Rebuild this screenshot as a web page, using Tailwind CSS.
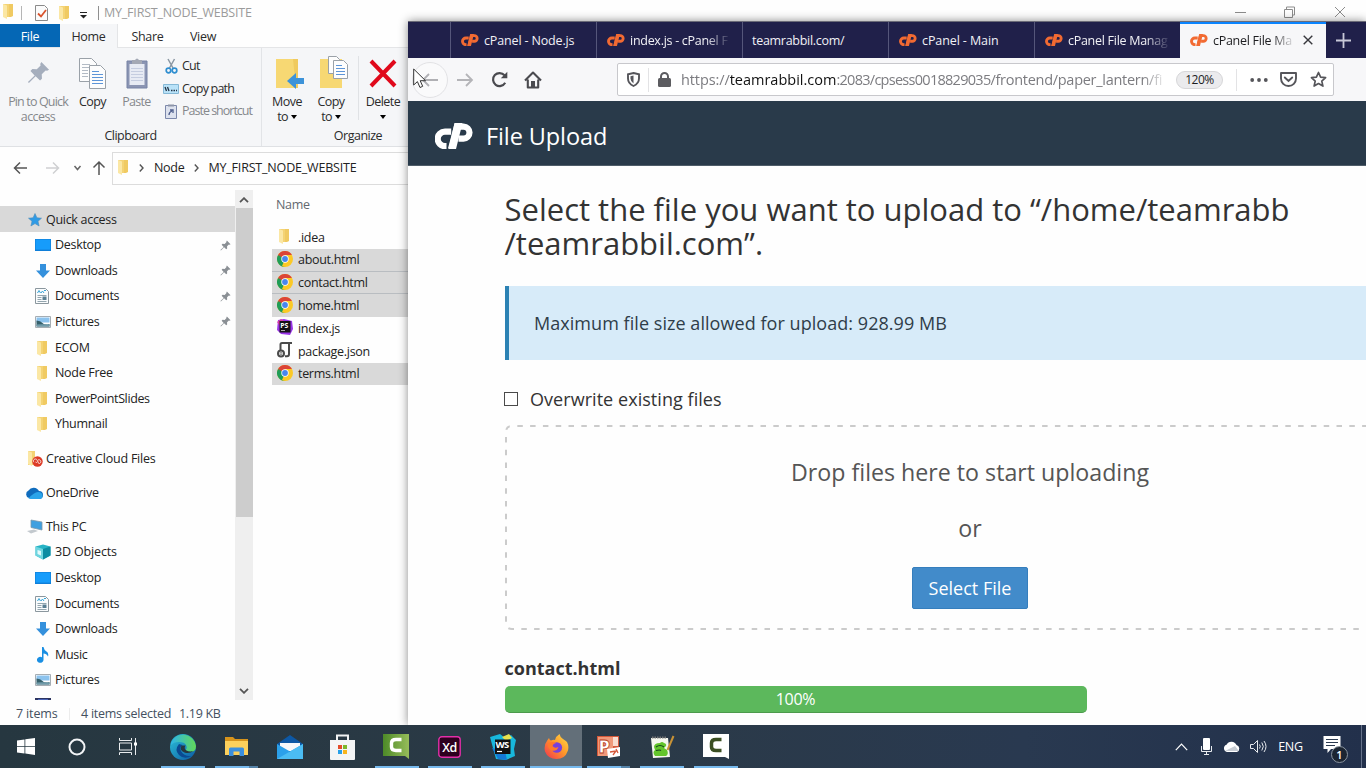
<!DOCTYPE html>
<html lang="en">
<head>
<meta charset="utf-8">
<title>File Upload</title>
<script src="https://cdn.jsdelivr.net/npm/@tailwindcss/browser@4"></script>
</head>
<body class="w-[1366px] h-[768px] overflow-hidden bg-white font-['Open_Sans','Noto_Sans',sans-serif]">

<svg width="0" height="0" class="absolute">
  <defs>
    <linearGradient id="gEdge" x1="0" y1="0" x2="1" y2="1"><stop offset="0" stop-color="#2cc3d8"/><stop offset="1" stop-color="#0c59a4"/></linearGradient>
    <linearGradient id="gEdge2" x1="0" x2="1"><stop offset="0" stop-color="#2fb5e8"/><stop offset="1" stop-color="#62d957"/></linearGradient>
    <linearGradient id="gFox" x1="1" y1="0" x2="0" y2="1"><stop offset="0" stop-color="#ffe14a"/><stop offset=".45" stop-color="#ff9a2a"/><stop offset="1" stop-color="#f2304f"/></linearGradient>
    <linearGradient id="gCam" x1="0" x2="1"><stop offset="0" stop-color="#4d8a28"/><stop offset="1" stop-color="#96bd5a"/></linearGradient>
    <symbol id="folder" viewBox="0 0 12 16"><path d="M1 1h7v13H1z" fill="#f4d374"/><path d="M7 1h4v12l-2 1H7z" fill="#f0ca62"/><path d="M1 1l4 1.6V16L1 14z" fill="#fbe7a4"/></symbol>
    <symbol id="monitor" viewBox="0 0 16 12"><path d="M0 0h16v12H0z" fill="#0f7ed8"/><path d="M.6.6h14.8v10H.6z" fill="#169cfb"/></symbol>
    <symbol id="down" viewBox="0 0 14 14"><path d="M4 0h6v6.500h4L7 14 0 6.500h4z" fill="#3490dc"/></symbol>
    <symbol id="doc" viewBox="0 0 14 16"><path d="M.5.5h10l3 3v12H.5z" fill="#fafcfd" stroke="#8b979e"/><path d="M2.500 5L4 2.500 5.500 5M6 5l1.500-2L9 5m0-2.500h2" stroke="#37a3d6" fill="none"/><path d="M2.500 7.500h9M2.500 9.500h4M2.500 11.500h4M2.500 13.500h9" stroke="#93a5ae"/><path d="M7.500 8.500h4v3.500h-4z" fill="#5b7f92"/></symbol>
    <symbol id="pic" viewBox="0 0 16 12"><path d="M.5.5h15v11H.5z" fill="#fff" stroke="#a5adb3"/><path d="M1.500 1.500h13v5h-13z" fill="#8cc3ee"/><path d="M1.500 4.500q4 0 6 2.500t7 1v2.500h-13z" fill="#35606b"/><path d="M1.500 8.500q6-.5 13 0v2h-13z" fill="#6f9aa9"/></symbol>
    <symbol id="pin" viewBox="0 0 12 12"><path d="M7.500.5l4 4-1 .6-.8-.2-2 2 .1 2.300-1 1L4.500 8 1 11.500.5 11 4 7.500 1.800 5.200l1-1 2.300.1 2-2-.2-.8z" fill="#8a8f94"/></symbol>
    <symbol id="chrome" viewBox="0 0 16 16"><circle cx="8" cy="8" r="8" fill="#fbc926"/><path d="M8 8L1.070 4A8 8 0 0 0 8 16z" fill="#1f9d58"/><path d="M8 8l3.300 2L8 16A8 8 0 0 1 5 15z" fill="#fbc926"/><path d="M1.070 4A8 8 0 0 1 14.930 4H8L5 9z" fill="#dc4437"/><path d="M1.070 4L4.600 10 8 8z" fill="#1f9d58"/><circle cx="8" cy="8" r="3.700" fill="#fff"/><circle cx="8" cy="8" r="2.900" fill="#4886ee"/></symbol>
    <symbol id="cp" viewBox="0 0 38 26"><g fill="none" stroke="currentColor" stroke-width="6.200"><path d="M16.200 8.600H10a6.400 6.400 0 0 0 0 14.600H11.500" /><path d="M16 26L22 3.600h6.500a6 6 0 0 1 0 12H23.500"/></g><path d="M19.500 0h8l-6.500 26h-7.500z" fill="currentColor"/></symbol>
  </defs>
</svg>

<!-- File Explorer window -->
<section class="absolute inset-0 h-[725px] bg-[#fefefe] flex flex-col text-[12.5px] leading-4 tracking-[-0.3px] text-[#2b2b2b]">
  <header class="h-6 shrink-0 flex items-center relative pt-[2px]">
    <svg class="w-[12px] h-[16px] ml-[2px] -mt-1"><use href="#folder"/></svg>
    <span class="w-px h-[14px] bg-[#b5b5b5] ml-[7px]"></span>
    <svg class="w-[13px] h-[16px] ml-[13px]" viewBox="0 0 13 16"><path d="M.5.5h9l3 3v12H.5z" fill="#fbfbfb" stroke="#8a8a8a"/><path d="M3 8.500l3 3L11 5" fill="none" stroke="#d9532c" stroke-width="1.800"/></svg>
    <svg class="w-[12px] h-[16px] ml-[10px]"><use href="#folder"/></svg>
    <svg class="w-[7px] h-[7px] ml-[10px] mt-1" viewBox="0 0 7 7"><path d="M0 .5h7" stroke="#222"/><path d="M0 3h7L3.500 6.500z" fill="#222"/></svg>
    <span class="w-px h-[14px] bg-[#8f8f8f] ml-[11px]"></span>
    <span class="ml-[5px] text-[#9b9b9b] tracking-[-0.2px]">MY_FIRST_NODE_WEBSITE</span>
    <svg class="w-[112px] h-[12px] absolute left-[1234px] top-[6px]" viewBox="0 0 112 12" fill="none" stroke="#8c8c8c"><path d="M1 6.500h11M50.500 3.500h8v8h-8zM52.500 3v-2h8v8h-2M101 1l10 10M111 1l-10 10"/></svg>
  </header>
  <nav class="h-6 shrink-0 flex text-center leading-[26px] border-b border-[#e4e5e7]">
    <span class="w-[60px] bg-[#0567b5] text-white">File</span>
    <span class="w-[58px] bg-[#f5f6f8] border-r border-[#e4e5e7] h-6">Home</span>
    <span class="w-[59px]">Share</span>
    <span class="w-[52px]">View</span>
  </nav>
  <div class="h-[99px] shrink-0 bg-[#f5f6f8] border-b border-[#dfe1e4] flex">
    <div class="w-[262px] border-r border-[#e2e4e7] flex flex-col">
      <div class="flex h-[80px]">
        <div class="w-[76px] flex flex-col items-center text-[#85888c] text-center leading-[15px] pt-[13px] tracking-[-0.85px] whitespace-nowrap">
          <svg class="w-[23px] h-[23px]"  viewBox="0 0 12 12"><path d="M7.500.5l4 4-1 .6-.8-.2-2 2 .1 2.300-1 1L4.500 8 1 11.500.5 11 4 7.500 1.800 5.200l1-1 2.300.1 2-2-.2-.8z" fill="#a5aebd"/></svg>
          <span class="mt-[10px]">Pin to Quick<br><span class="tracking-[-0.6px]">access</span></span>
        </div>
        <div class="w-[33px] flex flex-col items-center pt-[10px]">
          <svg class="w-[28px] h-[31px]" viewBox="0 0 28 31"><g fill="#fdfdfd" stroke="#9aa1a8"><path d="M.5.5h12l5 5v18H.5z"/><path d="M10.500 7.500h11l5 5v18h-16z"/></g><path d="M3 6.500h8M3 9.500h7M3 12.500h6M3 15.500h6M3 18.500h6" stroke="#b2bac4"/><path d="M13 13.500h7M13 16.500h11M13 19.500h11M13 22.500h11M13 25.500h11" stroke="#5d95d8"/></svg>
          <span class="mt-[5px] tracking-[-0.6px]">Copy</span>
        </div>
        <div class="w-[54px] flex flex-col items-center pt-[10px] text-[#85888c]">
          <svg class="w-[22px] h-[31px] ml-[2px]" viewBox="0 0 22 31"><path d="M1 3h20v27H1z" fill="#8b95b3" stroke="#7783a6"/><path d="M3.500 6h15v21h-15z" fill="#e7ebf4"/><path d="M6 2h3q2-3 4 0h3v4H6z" fill="#a4a9b5"/><path d="M5 10.500h12M5 13.500h12M5 16.500h12M5 19.500h12M5 22.500h12" stroke="#c5cde0"/></svg>
          <span class="mt-[5px] ml-px tracking-[-0.7px]">Paste</span>
        </div>
        <div class="flex flex-col pt-[6px] tracking-[-0.8px] whitespace-nowrap">
          <div class="flex items-center h-[23px]"><svg class="w-[13px] h-[16px] ml-[2px] mr-[4px]" viewBox="0 0 13 16" fill="none"><path d="M3 1l5 9M9.500 1l-5 9" stroke="#8a97a3" stroke-width="1.500"/><circle cx="3.500" cy="12.500" r="2.300" stroke="#2f8ed0" stroke-width="1.700"/><circle cx="9.500" cy="12.500" r="2.300" stroke="#2f8ed0" stroke-width="1.700"/></svg>Cut</div>
          <div class="flex items-center h-[23px]"><svg class="w-[16px] h-[10px] mr-[3px]" viewBox="0 0 16 10"><path d="M.5.5h15v9H.5z" fill="#b9e2f8" stroke="#85b8d6"/><path d="M2 3l1.500 4M4.500 3L6 7M8 6.500h1.500M10.500 6.500h1.500M13 6.500h1" stroke="#234" stroke-width="1.300"/></svg>Copy path</div>
          <div class="flex items-center h-[22.5px] text-[#85888c] tracking-[-1px]"><svg class="w-[12px] h-[15px] ml-[2px] mr-[5px]" viewBox="0 0 12 15"><path d="M.5 1.500h11v13H.5z" fill="#dde2ee" stroke="#7c88ab"/><path d="M3 .5h6v2H3z" fill="#8d95a8"/><path d="M4 11q0-3 3-4M5 6h3v3" stroke="#4d5d8c" stroke-width="1.300" fill="none"/></svg>Paste shortcut</div>
        </div>
      </div>
      <div class="text-center leading-[20px] tracking-[-0.5px]">Clipboard</div>
    </div>
    <div class="flex flex-col w-[192px]">
      <div class="flex h-[80px] text-center leading-[15px] tracking-[-0.55px]">
        <div class="w-[50px] flex flex-col items-center pt-[10px]">
          <svg class="w-[28px] h-[31px] ml-[5px]" viewBox="0 0 28 31"><path d="M0 1h22v29H0z" fill="#f7d873"/><path d="M17 1h5v29h-2z" fill="#f0ca5e"/><path d="M28 20h-8v-5l-9 8 9 8v-5h8z" fill="#3d93d9"/></svg>
          <span class="mt-[5px]">Move<br>to <span class="inline-block border-x-[3px] border-x-transparent border-t-[4px] border-t-black align-[2px]"></span></span>
        </div>
        <div class="w-[38px] flex flex-col items-center pt-[8px]">
          <svg class="w-[29px] h-[33px] ml-[7px]" viewBox="0 0 29 33"><path d="M0 3h22v29H0z" fill="#f7d873"/><g fill="#fdfdfd" stroke="#9aa1a8"><path d="M8.500.5h8l3 3v14h-11z"/><path d="M13.500 4.500h10l4 4v14h-14z"/></g><path d="M16 9.500h6M16 12.500h9M16 15.500h9M16 18.500h9" stroke="#5d95d8"/></svg>
          <span class="mt-[5px]">Copy<br>to <span class="inline-block border-x-[3px] border-x-transparent border-t-[4px] border-t-black align-[2px]"></span></span>
        </div>
        <span class="w-px h-[64px] mt-[8px] ml-[8px] bg-[#e0e2e5]"></span>
        <div class="w-[48px] flex flex-col items-center pt-[11px]">
          <svg class="w-[28px] h-[29px]" viewBox="0 0 28 29"><path d="M2 2l24 25M26 2L2 27" stroke="#e0091b" stroke-width="4"/></svg>
          <span class="mt-[6px]">Delete<br><span class="inline-block border-x-[3px] border-x-transparent border-t-[4px] border-t-black align-[2px]"></span></span>
        </div>
      </div>
      <div class="text-center leading-[20px] tracking-[-0.5px]">Organize</div>
    </div>
  </div>
  <div class="h-[40px] shrink-0 flex items-center pt-[2px]">
    <svg class="w-[94px] h-[16px] ml-[13px]" viewBox="0 0 94 16" fill="none" stroke-width="1.500"><path d="M14 8H1.500M7 2.500L1.500 8 7 13.500" stroke="#555"/><path d="M33 8h12.500M40 2.500L45.500 8 40 13.500" stroke="#cfd0d2"/><path d="M61.500 6l3 3.500L67.500 6" stroke="#666"/><path d="M86 15V2M80.500 7.500L86 2l5.500 5.500" stroke="#555"/></svg>
    <div class="ml-[5px] h-[33px] flex-1 border border-[#dcdcdc] flex items-center text-[#222]">
      <svg class="w-[12px] h-[16px] ml-[4px] -mt-[2px]"><use href="#folder"/></svg>
      <svg class="w-[5px] h-[8px] ml-[10px] mr-[10px]" viewBox="0 0 5 8"><path d="M.8.5L4 4 .8 7.500" fill="none" stroke="#555" stroke-width="1.400"/></svg>
      <span>Node</span>
      <svg class="w-[5px] h-[8px] ml-[10px] mr-[9px]" viewBox="0 0 5 8"><path d="M.8.5L4 4 .8 7.500" fill="none" stroke="#555" stroke-width="1.400"/></svg>
      <span class="tracking-[-0.18px]">MY_FIRST_NODE_WEBSITE</span>
    </div>
  </div>
  <div class="h-[513px] shrink-0 flex">
    <div class="w-[235px] pt-[19px] h-[513px] overflow-hidden flex flex-col text-[#222] [&>div]:h-[25.62px] [&>div]:pt-[1.500px] [&>div]:shrink-0 [&>div]:flex [&>div]:items-center">
      <div class="bg-[#d9d9d9]"><svg class="w-[14px] h-[14px] ml-[28px] mr-[4px]" viewBox="0 0 14 14"><path d="M7 .5l1.900 4.300 4.600.4-3.500 3.100 1.100 4.700L7 10.600 2.900 13 4 8.300.5 5.200l4.600-.4z" fill="#2f9be6" stroke="#4d8cb8" stroke-width=".6"/></svg>Quick access</div>
      <div><svg class="w-[16px] h-[12px] ml-[35px] mr-[4px]"><use href="#monitor"/></svg><span class="flex-1">Desktop</span><svg class="w-[11px] h-[11px] mr-[4px]"><use href="#pin"/></svg></div>
      <div><svg class="w-[14px] h-[14px] ml-[36px] mr-[5px]"><use href="#down"/></svg><span class="flex-1">Downloads</span><svg class="w-[11px] h-[11px] mr-[4px]"><use href="#pin"/></svg></div>
      <div><svg class="w-[14px] h-[16px] ml-[35px] mr-[6px]"><use href="#doc"/></svg><span class="flex-1">Documents</span><svg class="w-[11px] h-[11px] mr-[4px]"><use href="#pin"/></svg></div>
      <div><svg class="w-[16px] h-[12px] ml-[35px] mr-[4px]"><use href="#pic"/></svg><span class="flex-1">Pictures</span><svg class="w-[11px] h-[11px] mr-[4px]"><use href="#pin"/></svg></div>
      <div><svg class="w-[12px] h-[16px] ml-[36px] mr-[7px]"><use href="#folder"/></svg>ECOM</div>
      <div><svg class="w-[12px] h-[16px] ml-[36px] mr-[7px]"><use href="#folder"/></svg>Node Free</div>
      <div><svg class="w-[12px] h-[16px] ml-[36px] mr-[7px]"><use href="#folder"/></svg><span class="tracking-[-0.4px]">PowerPointSlides</span></div>
      <div><svg class="w-[12px] h-[16px] ml-[36px] mr-[7px]"><use href="#folder"/></svg>Yhumnail</div>
      <div class="mt-[8.5px]"><svg class="w-[16px] h-[16px] ml-[27px] mr-[3px]" viewBox="0 0 16 16"><path d="M1 0h7v14H1z" fill="#f4d374"/><path d="M1 0l4 1.600V15l-4-2z" fill="#fbe7a4"/><circle cx="10.500" cy="10.500" r="5.200" fill="#dc3b26"/><path d="M6.800 11.200a2 2 0 1 1 3.600-1.400l1.200 2M8.500 11a1.500 1.500 0 0 0 2 0M11 9a1.900 1.900 0 1 1 .5 3.500" stroke="#fff" stroke-width=".8" fill="none"/></svg><span class="tracking-[-0.22px]">Creative Cloud Files</span></div>
      <div class="mt-[8.5px]"><svg class="w-[18px] h-[12px] ml-[25px] mr-[3px]" viewBox="0 0 18 12"><path d="M4 11a4 4 0 0 1-.5-7.500A6 6 0 0 1 14 4a4 4 0 0 1 0 8z" fill="#0f6cbd"/><path d="M3.500 11.500Q9 5 13 5q4.500 0 4.500 4 0 3-3 3h-9z" fill="#2aa4ea"/></svg>OneDrive</div>
      <div class="mt-[8.5px]"><svg class="w-[17px] h-[15px] ml-[26px] mr-[3px]" viewBox="0 0 17 15"><path d="M5 1l11 2v8L5 8.500z" fill="#3fa0e0" stroke="#7c98aa" stroke-width=".8"/><path d="M1 12l7-1.500 4 1.500-7 2.500z" fill="#c3c9ce"/></svg>This PC</div>
      <div><svg class="w-[16px] h-[16px] ml-[35px] mr-[4px]" viewBox="0 0 16 16"><path d="M8 .5l7.500 2v9L8 15.500.5 11.500v-9z" fill="#27b3c5"/><path d="M.5 2.500L8 5v10.500l-7.500-4z" fill="#6ed5df"/><path d="M8 5l7.500-2.500v9L8 15.500z" fill="#0d8ca2"/><path d="M2.500 6L6 7v4.500l-3.500-1.500z" fill="#e3fafc"/></svg><span class="tracking-[-0.15px]">3D Objects</span></div>
      <div><svg class="w-[16px] h-[12px] ml-[35px] mr-[4px]"><use href="#monitor"/></svg>Desktop</div>
      <div><svg class="w-[14px] h-[16px] ml-[35px] mr-[6px]"><use href="#doc"/></svg>Documents</div>
      <div><svg class="w-[14px] h-[14px] ml-[36px] mr-[5px]"><use href="#down"/></svg>Downloads</div>
      <div><svg class="w-[12px] h-[16px] ml-[37px] mr-[6px]" viewBox="0 0 12 16"><path d="M5 0h1.500q.5 3 3 4.500T11 9.500q-1.500-3-4.500-3V13A3.300 3 0 1 1 5 10.300z" fill="#1a8fe3"/></svg>Music</div>
      <div><svg class="w-[16px] h-[12px] ml-[35px] mr-[4px]"><use href="#pic"/></svg>Pictures</div>
      <div><svg class="w-[16px] h-[16px] ml-[35px]" viewBox="0 0 16 16"><path d="M0 0h16v16H0z" fill="#2d3560"/><path d="M3 1h10v14H3z" fill="#4a64b8"/></svg></div>
    </div>
    <div class="w-[18px] mt-[3px] bg-[#efefef] flex flex-col items-center h-[510px]">
      <svg class="w-[10px] h-[6px] mt-[7px]" viewBox="0 0 10 6"><path d="M1 5.200L5 1.200l4 4" fill="none" stroke="#555" stroke-width="1.800"/></svg>
      <span class="w-[17px] h-[309px] mt-[5px] bg-[#cdcdcd]"></span>
      <svg class="w-[10px] h-[6px] mt-[171px]" viewBox="0 0 10 6"><path d="M1 .8l4 4 4-4" fill="none" stroke="#555" stroke-width="1.800"/></svg>
    </div>
    <div class="ml-[19px] flex-1 flex flex-col pt-[10px] text-[#222] [&>div]:h-[22.75px] [&>div]:pt-px [&>div]:flex [&>div]:items-center">
      <span class="pl-[4px] text-[#63686f] mb-[13px]">Name</span>
      <div><svg class="w-[12px] h-[16px] ml-[6px] mr-[8px] -mt-1"><use href="#folder"/></svg>.idea</div>
      <div class="bg-[#d9d9d9] border-b border-[#b9bdc1]"><svg class="w-[16px] h-[16px] ml-[5px] mr-[5px] -mt-[2px]"><use href="#chrome"/></svg>about.html</div>
      <div class="bg-[#d9d9d9] border-b border-[#b9bdc1]"><svg class="w-[16px] h-[16px] ml-[5px] mr-[5px] -mt-[2px]"><use href="#chrome"/></svg>contact.html</div>
      <div class="bg-[#d9d9d9]"><svg class="w-[16px] h-[16px] ml-[5px] mr-[5px] -mt-[2px]"><use href="#chrome"/></svg>home.html</div>
      <div><svg class="w-[16px] h-[16px] ml-[5px] mr-[5px] -mt-[3px]" viewBox="0 0 16 16"><path d="M1 1l6-1 8 2 1 8-3 6-9-1-4-4z" fill="#9a35e8"/><path d="M0 3l4-3 3 2-4 5z" fill="#d93ba5"/><path d="M2.500 2h11v11.500h-11z" fill="#151018"/><text x="3.200" y="8.600" font-size="6.800" font-weight="700" fill="#fff" letter-spacing="0">PS</text><path d="M4 11.500h4" stroke="#aaa"/></svg>index.js</div>
      <div><svg class="w-[16px] h-[16px] ml-[5px] mr-[5px] -mt-[3px]" viewBox="0 0 16 16" fill="none" stroke="#4a4a4a" stroke-width="2"><path d="M3.500 8V2.500Q3.500 1 5 1h10M12 1v11q0 2.300-2 2.300H8"/><circle cx="4" cy="11.500" r="3"/><circle cx="4" cy="11.500" r=".3"/></svg>package.json</div>
      <div class="bg-[#d9d9d9]"><svg class="w-[16px] h-[16px] ml-[5px] mr-[5px] -mt-[2px]"><use href="#chrome"/></svg>terms.html</div>
    </div>
  </div>
  <footer class="flex-1 flex items-center pl-[16px] pt-[2px] text-[#44505f] tracking-[-0.15px]"><span class="w-[53px]">7 items</span><span class="w-px h-3 bg-[#ececec]"></span><span class="ml-[11px] w-[98px] whitespace-nowrap tracking-[-0.25px]">4 items selected</span><span class="tracking-[-0.3px]">1.19 KB</span></footer>
</section>

<!-- Firefox window -->
<section class="absolute left-[408px] top-[21px] w-[958px] h-[704px] bg-[#fefefe] border-t border-[#6b6b78] shadow-[0_0_9px_rgba(0,0,0,0.45)] flex flex-col overflow-hidden">
  <div class="h-[36px] shrink-0 bg-[#20204a] flex text-[12.5px] text-[#f1f1f6] tracking-[-0.28px] whitespace-nowrap [&>div>span]:pt-[2px]">
    <span class="w-[42px] shrink-0"></span>
    <div class="w-[146px] shrink-0 border-l border-[#55567a] flex items-center"><svg class="w-[18px] h-[12px] ml-[10px] mr-[5px] text-[#f26a32]"><use href="#cp"/></svg><span class="tracking-[-0.15px]">cPanel - Node.js</span></div>
    <div class="w-[146px] shrink-0 border-l border-[#55567a] flex items-center"><svg class="w-[18px] h-[12px] ml-[10px] mr-[5px] text-[#f26a32]"><use href="#cp"/></svg><span class="w-[101px] [mask-image:linear-gradient(to_right,black_75%,transparent)]">index.js - cPanel F</span></div>
    <div class="w-[146px] shrink-0 border-l border-[#55567a] flex items-center pl-[9px]"><span>teamrabbil.com/</span></div>
    <div class="w-[146px] shrink-0 border-l border-[#55567a] flex items-center"><svg class="w-[18px] h-[12px] ml-[10px] mr-[5px] text-[#f26a32]"><use href="#cp"/></svg><span class="tracking-[-0.1px]">cPanel - Main</span></div>
    <div class="w-[146px] shrink-0 border-l border-[#55567a] flex items-center"><svg class="w-[18px] h-[12px] ml-[10px] mr-[5px] text-[#f26a32]"><use href="#cp"/></svg><span class="w-[103px] tracking-[-0.28px] [mask-image:linear-gradient(to_right,black_75%,transparent)]">cPanel File Manag</span></div>
    <div class="w-[146px] shrink-0 bg-[#f7f7f9] border-t-2 border-[#0a84ff] text-[#1d1d20] flex items-center pb-[2px]"><svg class="w-[18px] h-[12px] ml-[10px] mr-[5px] text-[#f26a32]"><use href="#cp"/></svg><span class="w-[83px] tracking-[-0.28px] [mask-image:linear-gradient(to_right,black_70%,transparent)]">cPanel File Ma</span><svg class="w-[10px] h-[10px] ml-[7px]" viewBox="0 0 10 10"><path d="M.7.7l8.600 8.600M9.300.7L.7 9.300" stroke="#38383d" stroke-width="1.400"/></svg></div>
    <div class="flex items-center pl-[10px]"><svg class="w-[15px] h-[15px]" viewBox="0 0 15 15"><path d="M7.500 0v15M0 7.500h15" stroke="#c9c9d8" stroke-width="1.800"/></svg></div>
  </div>
  <div class="h-[43px] shrink-0 bg-[#f7f7f9] flex items-center">
    <span class="w-[36px] h-[36px] ml-[4px] rounded-full border border-[#e2e2e5] bg-[#fafafb] flex items-center justify-center"><svg class="w-[18px] h-[14px]" viewBox="0 0 18 14"><path d="M17 7H2M8 1L2 7l6 6" fill="none" stroke="#b0b0b4" stroke-width="1.800"/></svg></span>
    <svg class="w-[18px] h-[14px] ml-[8px]" viewBox="0 0 18 14"><path d="M1 7h15M10 1l6 6-6 6" fill="none" stroke="#b4b4b8" stroke-width="1.800"/></svg>
    <svg class="w-[17px] h-[17px] ml-[17px]" viewBox="0 0 17 17"><path d="M14.200 11.800A6.500 6.500 0 1 1 13.500 4.300" fill="none" stroke="#4a4a4f" stroke-width="2.200"/><path d="M16.300.8v6.500H9.800z" fill="#4a4a4f"/></svg>
    <svg class="w-[18px] h-[18px] ml-[16px]" viewBox="0 0 18 18"><path d="M1 9.500L9 1.500l8 8M3.800 8.500V16.500h10.400V8.500" fill="none" stroke="#4a4a4f" stroke-width="2.100" stroke-linejoin="round"/><path d="M7 10h4v6.500H7z" fill="#4a4a4f"/></svg>
    <div class="ml-[75px] w-[717px] h-[33px] shrink-0 rounded-[2px] border border-[#c8c8cc] bg-white flex items-center text-[#7c7c80]">
      <svg class="w-[13px] h-[15px] ml-[9px]" viewBox="0 0 13 15"><path d="M6.500 1L12 2.300v4.200q0 5-5.500 7.500Q1 11.500 1 6.500V2.300z" fill="none" stroke="#55555a" stroke-width="1.900"/><path d="M6.500 3.500v8Q3.500 9.500 3.500 6.500V4.200z" fill="#55555a"/></svg>
      <span class="w-px h-[24px] bg-[#e3e3e5] ml-[8px]"></span>
      <svg class="w-[13px] h-[15px] ml-[9px]" viewBox="0 0 13 15"><rect y="6" width="13" height="9" rx="1.500" fill="#5c5c60"/><path d="M3 7V4.500a3.500 3.500 0 0 1 7 0V7" fill="none" stroke="#5c5c60" stroke-width="2"/></svg>
      <span class="ml-[10px] w-[486px] whitespace-nowrap text-[14.5px] [mask-image:linear-gradient(to_right,black_95%,transparent)]"><span class="tracking-[-0.1px]">https://</span><span class="text-[#111]">teamrabbil.com</span><span class="tracking-[-0.72px]">:2083/cpsess0018829035</span><span class="tracking-[-0.28px]">/frontend/paper_lantern/fi</span></span>
      <span class="ml-[9px] w-[47px] h-[18px] rounded-full bg-[#ebebed] border border-[#d6d6d8] text-[12px] leading-[16px] text-[#1d1d1f] text-center tracking-[-0.5px]">120%</span>
      <span class="w-px h-[22px] bg-[#e3e3e5] ml-[13px]"></span>
      <svg class="w-[18px] h-[4px] ml-[13px]" viewBox="0 0 18 4" fill="#55555a"><circle cx="2.200" cy="2" r="1.900"/><circle cx="9" cy="2" r="1.900"/><circle cx="15.800" cy="2" r="1.900"/></svg>
      <svg class="w-[17px] h-[15px] ml-[12px]" viewBox="0 0 17 15"><path d="M1 1h15v5.500a7.500 7.500 0 0 1-15 0z" fill="none" stroke="#55555a" stroke-width="1.900" stroke-linejoin="round"/><path d="M4.800 5.500l3.700 3.500 3.700-3.500" fill="none" stroke="#55555a" stroke-width="1.900" stroke-linecap="round"/></svg>
      <svg class="w-[17px] h-[17px] ml-[13px]" viewBox="0 0 17 17"><path d="M8.500 1.500l2.100 4.700 5 .5-3.800 3.400 1.100 5-4.400-2.600L4.100 15.100l1.100-5L1.400 6.700l5-.5z" fill="none" stroke="#55555a" stroke-width="1.700" stroke-linejoin="round"/></svg>
    </div>
  </div>
  <header class="h-[65px] shrink-0 bg-[#293a4a] border-b border-[#4f5d69] flex items-center pl-[27px] text-white mb-[7px] pt-[6px]">
    <svg class="w-[38px] h-[26px]"><use href="#cp"/></svg>
    <h1 class="ml-[13px] text-[23.500px] tracking-[-0.1px] leading-[30px]">File Upload</h1>
  </header>
  <main class="pl-[96.5px] text-[#333] text-[18px]">
    <h2 class="mt-[19px] text-[31px] leading-[34.3px] whitespace-nowrap">Select the file you want to upload to “/home/teamrabb<br>/teamrabbil.com”.</h2>
    <div class="mt-[25px] h-[74px] w-[931px] bg-[#d7ebf9] border-l-4 border-[#2c82b4] pl-[25.500px] leading-[75px] tracking-[0.05px] text-[#2f3d49]">Maximum file size allowed for upload: 928.99 MB</div>
    <label class="mt-[26px] flex items-center h-[26px]"><span class="w-[14px] h-[14px] border border-[#4a4a4a] bg-white mr-[12px] -ml-[.5px]"></span><span class="tracking-[0.05px] pt-px">Overwrite existing files</span></label>
    <div class="relative mt-[13px] w-[931px] h-[205px] flex flex-col items-center text-[23.200px] text-[#555] pt-[30px]">
      <svg class="absolute inset-0 w-[931px] h-[205px]" fill="none" stroke="#cbcbcb" stroke-width="2"><path d="M1 10V7Q1 1 7 1H931" stroke-dasharray="5.500 7.300" stroke-dashoffset="-5"/><path d="M1 12V198Q1 204 7 204H931" stroke-dasharray="5.500 7.300"/></svg>
      <span class="leading-[34px]">Drop files here to start uploading</span>
      <span class="leading-[34px] mt-[22px]">or</span>
      <button class="mt-[22px] w-[116px] h-[42px] shrink-0 bg-[#428bca] border border-[#357ebd] rounded-[2px] text-white text-[18px] leading-none">Select File</button>
    </div>
    <div class="mt-[24px] font-bold leading-[28px]">contact.html</div>
    <div class="mt-[4px] w-[582px] h-[27px] rounded-[5px] bg-[#5cb85c] border-b border-[#4c9a4c] text-white text-center text-[16px] leading-[27px] tracking-[-0.3px]">100%</div>
  </main>
</section>

<!-- Mouse pointer -->
<svg class="absolute left-[413px] top-[68px] w-[14px] h-[21px]" viewBox="0 0 14 21"><path d="M.7 1v16l3.700-3.400L7 19.500l2.700-1.200-2.500-5.600h5.300z" fill="#fff" stroke="#333"/></svg>

<!-- Taskbar -->
<footer class="absolute left-0 top-[725px] w-[1366px] h-[43px] bg-[linear-gradient(to_right,#263740,#2b3a47_45%,#293950_75%,#22304b)] flex [&>div]:h-[43px] [&>div]:flex [&>div]:items-center [&>div]:justify-center [&>div]:shrink-0">
  <div class="w-[51px]"><svg class="w-[18px] h-[17px]" viewBox="0 0 18 17" fill="#fff"><path d="M0 2.500L7.500 1.400V8H0zM8.300 1.300L18 0v8H8.300zM0 8.800h7.500v6.700L0 14.400zM8.300 8.800H18V17l-9.700-1.400z"/></svg></div>
  <div class="w-[51px]"><svg class="w-[18px] h-[18px]" viewBox="0 0 18 18"><circle cx="9" cy="9" r="7.500" fill="none" stroke="#f2f4f6" stroke-width="2"/></svg></div>
  <div class="w-[54px]"><svg class="w-[18px] h-[17px] mr-[2px]" viewBox="0 0 18 17" fill="none" stroke="#e8ebed"><path d="M.5 0v2.500h12V0M.5 17v-2.500h12V17M.5 5h12v7H.5zM16.500 0v17"/><path d="M15 4.500h3v3h-3z" fill="#fff" stroke="none"/></svg></div>
  <div class="w-[53px] relative"><svg class="w-[26px] h-[26px]" viewBox="0 0 26 26"><circle cx="13" cy="13" r="13" fill="url(#gEdge)"/><path d="M1 9A13 13 0 0 1 26 12q0 6-6 6-4 0-4.500-2 2-2 .5-5T9 8Q3.500 8 1 11z" fill="url(#gEdge2)"/><path d="M9 10q-5 6 0 11t13 1q-8 1-11-5-1.500-4 1.500-6z" fill="#0a4a92"/><path d="M11.500 11.500q-2.500 5 3 7 5 1.500 9-1.500-4 1-7-.5-3-2-1-5z" fill="#263740"/></svg><span class="absolute bottom-0 left-[5px] w-[44px] h-[2px] bg-[#76b9ed]"></span></div>
  <div class="w-[54px] relative"><svg class="w-[23px] h-[19px]" viewBox="0 0 23 19"><path d="M0 0h8l2 2h13v5H0z" fill="#d7941c"/><path d="M0 4h23v14H0z" fill="#fcd05c"/><path d="M4 19v-7q0-1.500 1.500-1.500h12Q19 10.500 19 12v7h-4.500v-4.500h-6V19z" fill="#3b8fdd"/></svg><span class="absolute bottom-0 left-[6px] w-[34px] h-[2px] bg-[#76b9ed]"></span><span class="absolute bottom-0 left-[40px] w-[9px] h-[2px] bg-[#5583a8]"></span></div>
  <div class="w-[53px]"><svg class="w-[26px] h-[24px]" viewBox="0 0 26 24"><path d="M0 9L13 0l13 9v3H0z" fill="#0d58a5"/><path d="M3 8h20v8H3z" fill="#f6f8fa"/><path d="M0 9l13 7.500L26 9v15H0z" fill="#2ba0ea"/><path d="M26 9v15H0l13-7.500z" fill="#4bbcf3"/></svg></div>
  <div class="w-[53px]"><svg class="w-[25px] h-[26px]" viewBox="0 0 25 26"><path d="M7 7V1.500h11V7" fill="none" stroke="#f1f3f4" stroke-width="2"/><path d="M0 6h25v19q0 1-1 1H1q-1 0-1-1z" fill="#f4f5f5"/><path d="M8 11h4v4H8z" fill="#e44d2a"/><path d="M13 11h4v4h-4z" fill="#7db82b"/><path d="M8 16h4v4H8z" fill="#28a0e8"/><path d="M13 16h4v4h-4z" fill="#f8b51c"/></svg></div>
  <div class="w-[54px] relative"><svg class="w-[26px] h-[25px]" viewBox="0 0 26 25"><path d="M0 0h26v25l-4-3H0z" fill="url(#gCam)"/><path d="M18.500 5.500H13q-4.500 0-4.500 3.500v4q0 3.500 4.500 3.500h5.500" fill="none" stroke="#fff" stroke-width="3.400"/></svg><span class="absolute bottom-0 left-[6px] w-[44px] h-[2px] bg-[#76b9ed]"></span></div>
  <div class="w-[53px] relative"><svg class="w-[23px] h-[22px]" viewBox="0 0 23 22"><rect x=".8" y=".8" width="21.400" height="20.400" rx="3" fill="#2e001f" stroke="#e32fa9" stroke-width="1.400"/><text x="11.500" y="15.500" text-anchor="middle" font-size="12.500" font-weight="600" fill="#fff" letter-spacing="-.5">Xd</text></svg><span class="absolute bottom-0 left-[5px] w-[44px] h-[2px] bg-[#76b9ed]"></span></div>
  <div class="w-[54px] relative"><svg class="w-[26px] h-[26px]" viewBox="0 0 26 26"><path d="M0 3l10-3 5 4 6-3 5 5-2 9 1 7-9 4-10-1z" fill="#18b7dc"/><path d="M12 3l7-3 3 4-6 3z" fill="#e9e34d"/><path d="M2 14l6 11 9 1-2-9z" fill="#1478d4"/><path d="M5 5.500h15.500V20H5z" fill="#111"/><text x="5.500" y="14" font-size="9.500" font-weight="700" fill="#fff" letter-spacing="-.7">WS</text><path d="M7 17.500h5" stroke="#fff" stroke-width="1.200"/></svg><span class="absolute bottom-0 left-[5px] w-[44px] h-[2px] bg-[#76b9ed]"></span></div>
  <div class="w-[52px] relative bg-[#636f79]"><svg class="w-[25px] h-[25px]" viewBox="0 0 25 25"><path d="M3.500 6L5 4q.5 2 2 2.500Q9 5.500 11 6q1-4 4.500-6 .5 3 3.500 5t4 3q2.500 5 .5 9.500Q21 25 12.500 25T1 17.500Q-.5 11 3.500 6z" fill="url(#gFox)"/><circle cx="12.800" cy="13.500" r="5.300" fill="#7740dc"/><path d="M4 9q5-2 8 0-3 .5-3.500 3 2 3 6 1-2 5-7 3.500Q3 14 4 9z" fill="#ff7a2c"/></svg><span class="absolute bottom-0 inset-x-0 h-[2px] bg-[#76b9ed]"></span></div>
  <div class="w-[53px] relative"><svg class="w-[25px] h-[24px]" viewBox="0 0 25 24"><path d="M1 1h22v20H1z" fill="#d4583a"/><path d="M2 2h15v19H2z" fill="#f0997a"/><path d="M17 2h5v9h-5z" fill="#f8dccf"/><text x="2.500" y="18" font-size="18" font-weight="800" fill="#fff" stroke="#b93c20" stroke-width=".8">P</text><path d="M11 14l13-2v9l-12 2z" fill="#fff"/><path d="M14 17l6-1-3 4M20 14l2 4" stroke="#d4583a" stroke-width="1.300" fill="none"/></svg><span class="absolute bottom-0 left-[5px] w-[34px] h-[2px] bg-[#76b9ed]"></span><span class="absolute bottom-0 left-[39px] w-[9px] h-[2px] bg-[#5583a8]"></span></div>
  <div class="w-[54px] relative"><svg class="w-[25px] h-[24px]" viewBox="0 0 25 24"><path d="M1 3h17l2 19-17 1z" fill="#f5f7ee"/><path d="M2 2.500h15" stroke="#777" stroke-width="2" stroke-dasharray="1.500 1"/><path d="M4 12q0-4 6-4 2-2 4 0 3 1 2 3l-2 2 3 2q2 4-1 6H5q-3-4 0-6z" fill="#63c52c"/><path d="M6 12q4-3 8 0M6 15.500q4-1 5 0" stroke="#16481a" fill="none" stroke-width="1.100"/><path d="M23.500 1l-6 14" stroke="#c99336" stroke-width="2"/></svg><span class="absolute bottom-0 left-[5px] w-[44px] h-[2px] bg-[#76b9ed]"></span></div>
  <div class="w-[54px] relative"><svg class="w-[26px] h-[25px]" viewBox="0 0 26 25"><path d="M0 0h26v25l-4-2H0z" fill="#fff"/><path d="M18.500 5.500H13q-4.500 0-4.500 3.500v4q0 3.500 4.500 3.500h5.500" fill="none" stroke="#3b4f22" stroke-width="3.500"/></svg><span class="absolute bottom-0 left-[5px] w-[44px] h-[2px] bg-[#76b9ed]"></span></div>
  <div class="ml-auto w-[26px]"><svg class="w-[13px] h-[8px]" viewBox="0 0 13 8"><path d="M.8 7.200l5.700-6 5.700 6" fill="none" stroke="#fff" stroke-width="1.200"/></svg></div>
  <div class="w-[25px]"><svg class="w-[11px] h-[17px]" viewBox="0 0 11 17"><rect x="2" width="7" height="12" rx="1" fill="#fff"/><path d="M.5 8v5.500h10V8M5.500 13.500V16M3 16.500h5" fill="none" stroke="#e8ebef"/></svg></div>
  <div class="w-[26px]"><svg class="w-[18px] h-[11px]" viewBox="0 0 18 11"><path d="M4 11a3.800 3.800 0 0 1-.5-7.300A5.500 5.500 0 0 1 13.500 4 3.700 3.700 0 0 1 14 11z" fill="#fff"/><path d="M2 10l10-5 4 5z" fill="#c7ccd3"/></svg></div>
  <div class="w-[26px]"><svg class="w-[17px] h-[13px]" viewBox="0 0 17 13" fill="none" stroke="#e8ebef"><path d="M.5 4.500h3l4-4v12l-4-4h-3zM9.500 4.500q1.500 2 0 4M11.800 2.500q3 4 0 8M14 1q4 5.500 0 11"/></svg></div>
  <div class="w-[39px] text-white text-[12.500px] tracking-[-0.3px] pt-[2px]">ENG</div>
  <div class="w-[43px] relative mr-[8px]"><svg class="w-[18px] h-[18px] -mt-1" viewBox="0 0 18 18"><path d="M.5 0h17v13H8l-3.500 4V13h-4z" fill="#fff"/><path d="M3 3.500h12M3 6.500h12M3 9.500h9" stroke="#2b3a50"/></svg><span class="absolute left-[21px] top-[21px] w-[17px] h-[17px] rounded-full bg-[#1c2532] border border-[#8b95a1] text-white text-[11px] font-semibold leading-[15px] text-center">1</span></div>
  <div class="w-[5px] border-l border-[#66728a]"></div>
</footer>
</body>
</html>
